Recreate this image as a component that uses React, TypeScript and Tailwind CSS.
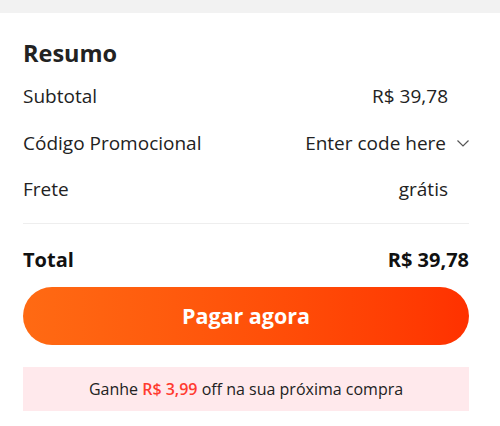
export default function App() {
  return (
    <div className="w-[500px] h-[426px] bg-white flex flex-col" style={{ fontFamily: '"Open Sans", sans-serif' }}>
      <div className="h-[13px] bg-[#f2f2f2]" />
      <div className="flex flex-col px-[23px] pr-[31px] text-[#222]">
        <h2 className="text-[23.5px] font-bold mt-[25px] leading-[30px]">Resumo</h2>

        <div className="flex items-center justify-between mt-[13px] h-[30px] text-[19px]">
          <span>Subtotal</span>
          <span className="mr-[21px]">R$ 39,78</span>
        </div>

        <div className="flex items-center justify-between mt-[17px] h-[30px] text-[19px]">
          <span>Código Promocional</span>
          <span className="flex items-center gap-[11px]">
            Enter code here
            <svg width="12" height="7" viewBox="0 0 12 7" fill="none" stroke="#555" strokeWidth="1.2">
              <path d="M0.5 0.5 L6 6 L11.5 0.5" />
            </svg>
          </span>
        </div>

        <div className="flex items-center justify-between mt-[16px] h-[30px] text-[19px]">
          <span>Frete</span>
          <span className="mr-[21px]">grátis</span>
        </div>

        <div className="h-px bg-[#eeeeee] mt-[19px]" />

        <div className="flex items-center justify-between mt-[21px] h-[30px] text-[20px] font-bold text-[#111]">
          <span>Total</span>
          <span>R$ 39,78</span>
        </div>

        <button className="mt-[12px] h-[58px] rounded-full bg-gradient-to-r from-[#ff6a13] to-[#ff3100] text-white text-[21.5px] font-bold">
          Pagar agora
        </button>

        <div className="mt-[22px] h-[44px] bg-[#ffe9ec] flex items-center justify-center text-[16px] text-[#222]">
          <span>
            Ganhe <span className="text-[#ff3b30] font-semibold">R$ 3,99</span> off na sua próxima compra
          </span>
        </div>
      </div>
    </div>
  );
}
